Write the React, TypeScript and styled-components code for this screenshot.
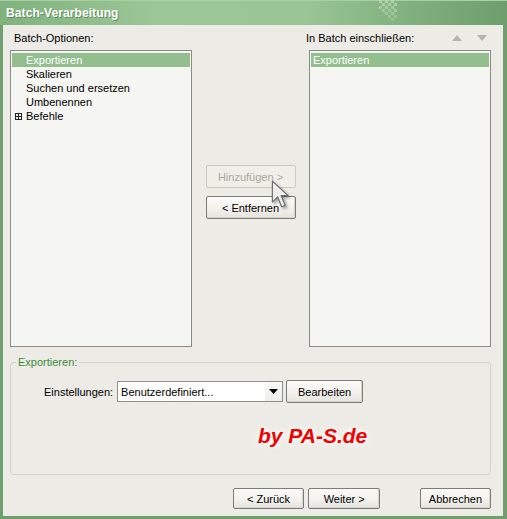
import React from 'react';
import styled, { createGlobalStyle } from 'styled-components';

const Global = createGlobalStyle`
  html, body {
    margin: 0;
    padding: 0;
    background: #ecebe5;
  }
  body {
    font-family: 'Liberation Sans', Arial, sans-serif;
    font-size: 11px;
    color: #000;
  }
`;

const Window = styled.div`
  width: 507px;
  height: 519px;
  display: flex;
  flex-direction: column;
  overflow: hidden;
`;

const TitleBar = styled.div`
  position: relative;
  height: 25px;
  flex: none;
  display: flex;
  align-items: center;
  padding-left: 6px;
  background: linear-gradient(
    to right,
    #80b27d 0%,
    #9bc697 30%,
    #9ac595 60%,
    #88b785 74%,
    #6e9e6b 100%
  );
  box-shadow: inset 0 1px 0 #a9cfa5;
`;

const Title = styled.span`
  color: #fff;
  font-weight: bold;
  font-size: 12px;
  letter-spacing: 0.1px;
  text-shadow: 1px 1px 0 rgba(60, 100, 60, 0.55);
`;

const Checker = styled.svg`
  position: absolute;
  left: 376px;
  top: 0;
`;

const Content = styled.div`
  flex: 1;
  display: flex;
  flex-direction: column;
  background: #ecebe5;
  border-left: 3px solid #6f9f6c;
  border-right: 4px solid #6f9f6c;
  border-bottom: 3px solid #6f9f6c;
  padding: 6px 12px 0 7px;
`;

const TopRow = styled.div`
  display: flex;
  height: 316px;
`;

const Column = styled.div`
  width: 182px;
  display: flex;
  flex-direction: column;
`;

const Label = styled.div`
  height: 14px;
  line-height: 14px;
  margin-bottom: 5px;
  margin-left: 4px;
  white-space: nowrap;
`;

const LabelRow = styled.div`
  display: flex;
  align-items: center;
  height: 14px;
  margin-bottom: 5px;
  margin-left: -3px;
`;

const Arrows = styled.div`
  margin-left: auto;
  margin-right: 4px;
  display: flex;
  gap: 15px;
`;

const List = styled.div`
  flex: 1;
  background: #f5f5f1;
  border: 1px solid #8a8a86;
  padding: 2px 1px;
`;

const Item = styled.div<{ $selected?: boolean; $indent?: number }>`
  height: 14px;
  line-height: 14px;
  display: flex;
  align-items: center;
  padding-left: ${(p) => p.$indent ?? 2}px;
  background: ${(p) => (p.$selected ? '#93bf8f' : 'transparent')};
  color: ${(p) => (p.$selected ? '#fff' : '#000')};
  white-space: nowrap;
`;

const Expander = styled.span`
  width: 7px;
  height: 7px;
  border: 1px solid #222;
  margin: 0 4px 0 -11px;
  position: relative;
  box-sizing: border-box;
  &::before,
  &::after {
    content: '';
    position: absolute;
    background: #222;
  }
  &::before {
    left: 0;
    right: 0;
    top: 2px;
    height: 1px;
  }
  &::after {
    top: 0;
    bottom: 0;
    left: 2px;
    width: 1px;
  }
`;

const Middle = styled.div`
  width: 117px;
  display: flex;
  flex-direction: column;
  align-items: center;
  padding-top: 134px;
`;

const ButtonStack = styled.div`
  position: relative;
  display: flex;
  flex-direction: column;
  gap: 8px;
`;

const Button = styled.button<{ $w: number; $h?: number }>`
  width: ${(p) => p.$w}px;
  height: ${(p) => p.$h ?? 21}px;
  padding: 0;
  font-family: 'Liberation Sans', Arial, sans-serif;
  font-size: 11px;
  color: #000;
  border: 1px solid #7d7d78;
  border-radius: 2px;
  background: linear-gradient(to bottom, #fbfbf9 0%, #f1f0ec 60%, #e3e2dc 100%);
  box-shadow: inset -1px -1px 0 #d6d5cc;
  &:disabled {
    color: #aaa89b;
    border-color: #cbc9bd;
    background: #efeee9;
    box-shadow: none;
  }
`;

const Cursor = styled.svg`
  position: absolute;
  left: 65px;
  top: 15px;
  filter: drop-shadow(2px 2px 1.5px rgba(0, 0, 0, 0.35));
`;

const Group = styled.fieldset`
  margin: 8px 0 0 0;
  padding: 0;
  height: 120px;
  box-sizing: border-box;
  border: 1px solid #d3d2c6;
  border-radius: 4px;
  min-width: 0;
`;

const Legend = styled.legend`
  margin-left: 5px;
  padding: 0 2px;
  color: #3d8a36;
  line-height: 14px;
`;

const SettingsRow = styled.div`
  display: flex;
  align-items: center;
  margin: 11px 0 0 33px;
  height: 23px;
`;

const Select = styled.div`
  width: 166px;
  height: 21px;
  box-sizing: border-box;
  margin-left: 4px;
  border: 1px solid #8e8e8a;
  background: #fff;
  display: flex;
  align-items: center;
  padding-left: 3px;
`;

const SelectArrow = styled.div`
  margin-left: auto;
  width: 17px;
  height: 19px;
  display: flex;
  align-items: center;
  justify-content: center;
  background: linear-gradient(to bottom, #fafaf8, #ededea);
`;

const Watermark = styled.div`
  margin: 21px 0 0 247px;
  font-family: 'Liberation Sans', Arial, sans-serif;
  font-weight: bold;
  font-style: italic;
  font-size: 21px;
  color: #f20000;
  text-shadow: 0 0 4px #fff, 0 0 8px #fff;
  white-space: nowrap;
`;

const Footer = styled.div`
  display: flex;
  margin-top: 13px;
  gap: 4px;
  padding-left: 223px;
`;

const Spacer = styled.div`
  width: 33px;
`;

const checker = [
  [3, 0], [9, 0], [15, 0], [6, 3], [12, 3], [18, 3], [3, 6], [9, 6], [15, 6],
  [6, 9], [12, 9], [18, 9], [9, 12], [15, 12], [12, 15], [18, 15], [15, 18],
];

export default function App() {
  return (
    <Window>
      <Global />
      <TitleBar>
        <Title>Batch-Verarbeitung</Title>
        <Checker width="30" height="25" viewBox="0 0 30 25">
          {checker.map(([x, y], i) => (
            <rect key={i} x={x} y={y} width="3" height="3" fill="#b9d8b5" opacity={0.8 - y * 0.025} />
          ))}
        </Checker>
      </TitleBar>
      <Content>
        <TopRow>
          <Column>
            <Label>Batch-Optionen:</Label>
            <List>
              <Item $selected $indent={14}>Exportieren</Item>
              <Item $indent={14}>Skalieren</Item>
              <Item $indent={14}>Suchen und ersetzen</Item>
              <Item $indent={14}>Umbenennen</Item>
              <Item $indent={14}>
                <Expander />
                Befehle
              </Item>
            </List>
          </Column>
          <Middle>
            <ButtonStack>
              <Button $w={90} $h={23} disabled>
                Hinzufügen &gt;
              </Button>
              <Button $w={90} $h={23}>&lt; Entfernen</Button>
              <Cursor width="19" height="29" viewBox="0 0 16 25">
                <path
                  d="M1 1 L1 19 L5.5 14.5 L9 23 L12 21.8 L8.6 13.5 L14.5 13.5 Z"
                  fill="#f0f0ee"
                  stroke="#6d6d6a"
                  strokeWidth="1"
                  strokeLinejoin="round"
                />
              </Cursor>
            </ButtonStack>
          </Middle>
          <Column>
            <LabelRow>
              In Batch einschließen:
              <Arrows>
                <svg width="10" height="6" viewBox="0 0 10 6">
                  <path d="M0 6 L5 0 L10 6 Z" fill="#b5b5b0" />
                </svg>
                <svg width="10" height="6" viewBox="0 0 10 6">
                  <path d="M0 0 L10 0 L5 6 Z" fill="#b5b5b0" />
                </svg>
              </Arrows>
            </LabelRow>
            <List>
              <Item $selected>Exportieren</Item>
            </List>
          </Column>
        </TopRow>
        <Group>
          <Legend>Exportieren:</Legend>
          <SettingsRow>
            Einstellungen:
            <Select>
              Benutzerdefiniert...
              <SelectArrow>
                <svg width="9" height="5" viewBox="0 0 9 5">
                  <path d="M0 0 L9 0 L4.5 5 Z" fill="#000" />
                </svg>
              </SelectArrow>
            </Select>
            <Button $w={77} $h={23} style={{ marginLeft: 3 }}>
              Bearbeiten
            </Button>
          </SettingsRow>
          <Watermark>by PA-S.de</Watermark>
        </Group>
        <Footer>
          <Button $w={74}>&lt; Zurück</Button>
          <Button $w={75}>Weiter &gt;</Button>
          <Spacer />
          <Button $w={74}>Abbrechen</Button>
        </Footer>
      </Content>
    </Window>
  );
}
